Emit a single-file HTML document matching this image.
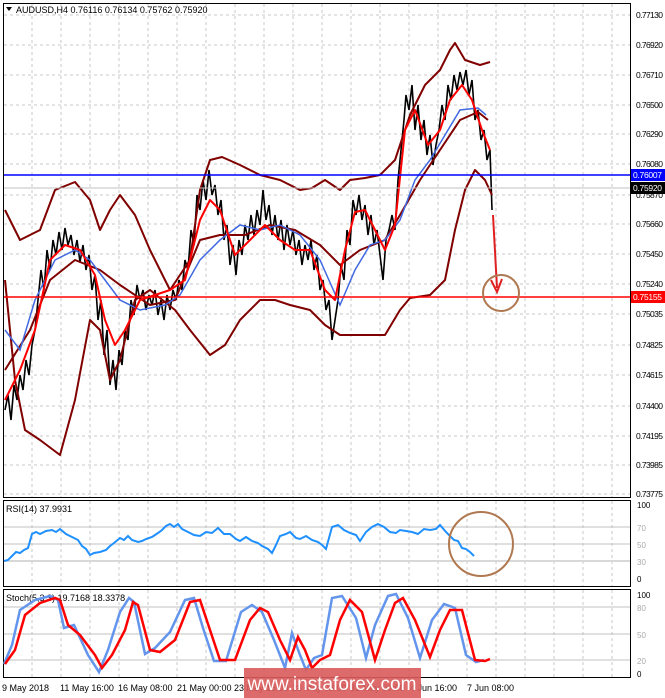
<!DOCTYPE html>
<html><head><meta charset="utf-8"><style>
body{margin:0;background:#fff;width:665px;height:698px;overflow:hidden;font-family:"Liberation Sans",sans-serif}
svg{display:block}
text{font-family:"Liberation Sans",sans-serif;font-size:9px;fill:#000}
.ax text{font-size:8.5px}
</style></head><body>
<svg width="665" height="698" viewBox="0 0 665 698" xmlns="http://www.w3.org/2000/svg">
<rect width="665" height="698" fill="#fff"/>
<g stroke="#c8c8c8" stroke-dasharray="3,3" stroke-width="1">
<path d="M32 4V497M61 4V497M90 4V497M119 4V497M148 4V497M177 4V497M206 4V497M235 4V497M264 4V497M293 4V497M322 4V497M351 4V497M380 4V497M409 4V497M438 4V497M467 4V497M496 4V497M525 4V497M554 4V497M583 4V497M612 4V497"/>
<path d="M32 501V586M61 501V586M90 501V586M119 501V586M148 501V586M177 501V586M206 501V586M235 501V586M264 501V586M293 501V586M322 501V586M351 501V586M380 501V586M409 501V586M438 501V586M467 501V586M496 501V586M525 501V586M554 501V586M583 501V586M612 501V586"/>
<path d="M32 590V677M61 590V677M90 590V677M119 590V677M148 590V677M177 590V677M206 590V677M235 590V677M264 590V677M293 590V677M322 590V677M351 590V677M380 590V677M409 590V677M438 590V677M467 590V677M496 590V677M525 590V677M554 590V677M583 590V677M612 590V677"/>
<path d="M4 15H630M4 45H630M4 75H630M4 105H630M4 134H630M4 164H630M4 195H630M4 224H630M4 254H630M4 284H630M4 314H630M4 345H630M4 375H630M4 406H630M4 436H630M4 465H630M4 494H630"/>
</g>
<g stroke="#c0c0c0" stroke-width="1">
<path d="M4 527H630M4 544H630"/><path d="M4 561H630" stroke-width="2" stroke="#d8d8d8"/>
<path d="M4 607H630M4 634H630M4 660H630"/>
</g>
<g fill="none" stroke="#000" stroke-width="1">
<rect x="3.5" y="3.5" width="627" height="494"/>
<rect x="3.5" y="500.5" width="627" height="86"/>
<rect x="3.5" y="589.5" width="627" height="88"/>
</g>
<polyline fill="none" stroke="#000" stroke-width="1.6" points="5,410 8,395 11,420 14,385 17,400 20,375 23,390 26,360 29,375 32,345 35,330 38,300 41,270 44,290 47,250 50,270 53,240 56,255 59,232 62,250 65,228 68,245 71,235 74,255 77,240 80,262 83,245 86,270 89,255 92,290 95,275 98,320 101,300 104,355 107,330 110,385 113,360 116,390 119,350 122,365 125,330 128,340 131,300 134,315 137,285 140,300 143,290 146,310 149,295 152,305 155,290 158,315 161,300 164,320 167,295 170,310 173,290 176,300 179,280 182,290 185,260 188,270 191,230 194,245 197,195 200,210 203,180 206,200 209,170 212,195 215,185 218,215 221,200 224,240 227,225 230,265 233,245 236,275 239,240 242,255 245,225 248,240 251,215 254,235 257,210 260,225 263,190 266,220 269,205 272,235 275,215 278,240 281,220 284,250 287,225 290,245 293,230 296,255 299,240 302,265 305,245 308,260 311,240 314,270 317,255 320,290 323,280 326,310 329,300 332,340 335,320 338,300 341,265 344,280 347,230 350,245 353,200 356,215 359,195 362,220 365,205 368,235 371,215 374,245 377,230 380,255 383,280 386,240 389,230 392,215 395,230 398,180 401,150 404,120 406,95 409,110 412,85 415,130 418,105 421,140 424,120 427,155 430,135 433,165 436,145 439,130 442,105 445,120 448,85 451,100 454,75 457,90 460,72 463,85 466,70 469,95 472,80 475,120 478,110 481,140 484,130 487,160 490,150 492,210"/>
<g fill="none" stroke="#800000" stroke-width="2" stroke-linejoin="round">
<polyline points="5,210 20,240 40,230 55,190 75,182 90,200 100,230 110,210 120,195 135,215 150,250 170,290 190,260 200,190 210,160 222,157 240,165 260,175 280,180 300,190 312,188 325,180 340,190 350,180 365,178 380,175 395,160 410,115 425,85 440,70 450,50 455,43 465,60 480,65 490,62"/>
<polyline points="5,280 15,380 25,430 40,440 60,455 75,400 90,320 100,330 110,380 120,360 135,300 150,290 175,310 190,330 210,355 225,345 240,320 260,300 275,300 290,305 310,310 325,325 340,335 360,335 385,335 400,310 410,298 430,295 445,280 455,230 465,190 475,170 485,180 492,195"/>
<polyline points="5,370 30,330 50,280 75,260 100,270 120,285 150,305 175,300 200,240 220,235 245,235 270,225 295,230 320,245 340,265 360,250 385,240 400,215 420,180 440,150 460,120 478,112 488,120"/>
</g>
<polyline fill="none" stroke="#4169e1" stroke-width="1.5" points="5,330 20,350 35,300 55,260 75,250 90,260 105,280 120,300 140,310 165,305 180,295 200,260 220,240 240,225 260,230 280,225 300,235 320,260 340,305 355,270 370,245 385,240 400,220 415,180 430,160 445,135 460,110 478,108 486,115"/>
<polyline fill="none" stroke="#ff0000" stroke-width="2" stroke-linejoin="round" points="5,400 20,370 35,330 50,260 65,245 80,250 95,275 105,320 115,345 125,330 140,300 155,295 170,290 185,280 200,220 210,200 220,210 235,255 250,240 265,225 280,240 295,250 310,250 325,290 335,300 345,250 355,212 365,210 375,230 385,250 395,225 405,130 415,110 428,145 440,130 450,100 462,85 472,100 482,130 490,150"/>
<line x1="4" y1="175" x2="630" y2="175" stroke="#0000ff" stroke-width="1.5"/>
<line x1="4" y1="188" x2="630" y2="188" stroke="#c0c0c0"/>
<line x1="4" y1="297" x2="630" y2="297" stroke="#ff0000" stroke-width="1.5"/>
<path d="M493 215L497 288" stroke="#e02020" stroke-width="2" fill="none"/>
<path d="M491 280L497 292L502 279" stroke="#e02020" stroke-width="2" fill="none"/>
<circle cx="501" cy="293" r="18" fill="none" stroke="#b07850" stroke-width="2"/>
<path d="M6 7L12 7L9 11Z" fill="#000"/>
<text x="16" y="13">AUDUSD,H4  0.76116 0.76134 0.75762 0.75920</text>
<g class="ax">
<text x="636" y="18" textLength="27">0.77130</text><text x="636" y="48" textLength="27">0.76920</text><text x="636" y="78" textLength="27">0.76710</text><text x="636" y="108" textLength="27">0.76500</text><text x="636" y="137" textLength="27">0.76290</text><text x="636" y="167" textLength="27">0.76080</text><text x="636" y="198" textLength="27">0.75870</text><text x="636" y="227" textLength="27">0.75660</text><text x="636" y="257" textLength="27">0.75450</text><text x="636" y="287" textLength="27">0.75240</text><text x="636" y="317" textLength="27">0.75035</text><text x="636" y="348" textLength="27">0.74825</text><text x="636" y="378" textLength="27">0.74615</text><text x="636" y="409" textLength="27">0.74400</text><text x="636" y="439" textLength="27">0.74195</text><text x="636" y="468" textLength="27">0.73985</text><text x="636" y="497" textLength="27">0.73775</text>
<rect x="631" y="169" width="34" height="12" fill="#0000ff"/><text x="633" y="178" textLength="29" style="fill:#fff">0.76007</text>
<rect x="631" y="182" width="34" height="12" fill="#000"/><text x="633" y="191" textLength="29" style="fill:#fff">0.75920</text>
<rect x="631" y="291" width="34" height="12" fill="#ff0000"/><text x="633" y="300" textLength="29" style="fill:#fff">0.75155</text>
</g>
<text x="6" y="512">RSI(14) 37.9931</text>
<polyline fill="none" stroke="#1e90ff" stroke-width="2" points="4,561 8,560 12,556 16,552 20,553 24,550 28,548 32,534 36,532 40,534 46,531 52,530 56,532 60,529 66,534 72,537 78,540 82,546 86,549 90,555 94,553 100,552 106,550 110,546 114,543 120,538 124,540 128,536 132,540 138,542 142,541 146,539 152,537 158,533 162,530 166,526 170,524 174,527 178,524 182,529 188,532 194,535 200,536 206,532 212,533 218,528 224,534 230,534 236,539 240,541 246,537 252,541 258,543 262,546 268,549 272,553 276,545 280,536 286,534 290,532 296,538 300,539 306,536 312,540 318,542 322,545 326,549 332,527 338,525 344,530 350,533 356,535 360,541 366,532 372,527 378,524 384,527 390,532 396,533 400,530 406,531 412,532 418,534 424,529 430,530 436,529 440,525 446,532 450,536 454,540 458,541 462,548 466,549 470,552 474,556"/>
<circle cx="481" cy="544" r="32" fill="none" stroke="#b07850" stroke-width="2"/>
<g style="font-size:8px"><text x="637" y="508" style="font-size:8px">100</text><text x="637" y="531" style="font-size:8px;fill:#aaa">70</text><text x="637" y="548" style="font-size:8px;fill:#aaa">50</text><text x="637" y="565" style="font-size:8px;fill:#aaa">30</text><text x="637" y="582" style="font-size:8px">0</text></g>
<text x="6" y="601">Stoch(5,3,3) 19.7168 18.3378</text>
<polyline fill="none" stroke="#6495ed" stroke-width="2.5" points="4,664 12,645 20,610 35,600 50,596 58,600 64,628 74,625 88,655 99,672 108,650 120,612 129,598 134,602 145,654 155,648 170,632 185,600 194,598 203,628 214,661 226,661 241,612 252,605 262,612 274,640 285,668 292,633 300,655 306,670 314,658 322,655 332,598 342,596 356,618 366,658 375,625 388,596 396,594 408,618 420,658 432,620 444,604 455,608 466,655 476,662 484,660"/>
<polyline fill="none" stroke="#ff0000" stroke-width="2.5" points="5,664 15,650 25,615 40,603 55,598 60,600 68,625 80,635 95,655 102,668 112,655 125,630 133,602 138,605 150,650 160,652 175,640 190,602 200,600 210,630 220,660 235,660 250,620 260,608 268,612 280,640 290,660 298,637 305,650 312,668 320,660 330,655 340,620 350,600 362,612 375,660 385,630 395,603 403,598 415,620 430,657 440,630 450,610 462,610 475,660 485,661 490,659"/>
<g><text x="637" y="598" style="font-size:8px">100</text><text x="637" y="611" style="font-size:8px;fill:#aaa">80</text><text x="637" y="638" style="font-size:8px;fill:#aaa">50</text><text x="637" y="664" style="font-size:8px;fill:#aaa">20</text><text x="637" y="677" style="font-size:8px">0</text></g>
<text x="2" y="691">9 May 2018</text><text x="60" y="691">11 May 16:00</text><text x="118" y="691">16 May 08:00</text><text x="177" y="691">21 May 00:00</text><text x="234" y="691">23 May 16:00</text><text x="292" y="691">28 May 08:00</text><text x="350" y="691">31 May 00:00</text><text x="410" y="691">4 Jun 16:00</text><text x="467" y="691">7 Jun 08:00</text>
<rect x="244" y="668" width="177" height="30" fill="#d95b5b" opacity="0.9"/>
<text x="332" y="690" text-anchor="middle" style="font-size:19px;fill:#fff">www.instaforex.com</text>
</svg>
</body></html>
